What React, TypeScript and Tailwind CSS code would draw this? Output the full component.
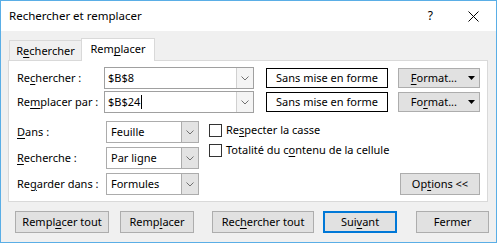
import React from 'react';

const font = { fontFamily: '"Noto Sans", "Open Sans", sans-serif' };

function Key({ children }: { children: React.ReactNode }) {
  return <span className="underline underline-offset-2 decoration-1">{children}</span>;
}

function Chevron() {
  return (
    <svg width="8" height="5" viewBox="0 0 8 5" className="block">
      <path d="M0.5 0.5 L4 4 L7.5 0.5" fill="none" stroke="#707070" strokeWidth="1" />
    </svg>
  );
}

function Caret() {
  return (
    <svg width="7" height="4" viewBox="0 0 7 4" className="block">
      <path d="M0 0 H7 L3.5 4 Z" fill="#000" />
    </svg>
  );
}

function EditCombo({ value, caret }: { value: string; caret?: boolean }) {
  return (
    <div className="flex h-[22px] w-[150px] border border-[#a0a0a0] bg-white">
      <div className="flex flex-1 items-center pl-[3px] text-[11px] text-black">
        {value}
        {caret && <span className="ml-[1px] inline-block h-[14px] w-[1px] bg-black" />}
      </div>
      <div className="flex w-[17px] items-center justify-center border-l border-[#d0d0d0] bg-[#f4f4f4]">
        <Chevron />
      </div>
    </div>
  );
}

function ListCombo({ value }: { value: string }) {
  return (
    <div className="flex h-[22px] w-[93px] border border-[#acacac] bg-white">
      <div className="flex flex-1 items-center pl-[4px] text-[11px] text-black">{value}</div>
      <div className="flex w-[17px] items-center justify-center border-l border-[#acacac] bg-[#e3e3e3]">
        <Chevron />
      </div>
    </div>
  );
}

function Btn({
  children,
  className = '',
  primary,
}: {
  children: React.ReactNode;
  className?: string;
  primary?: boolean;
}) {
  return (
    <div
      className={`flex h-[22px] items-center justify-center whitespace-nowrap bg-[#e1e1e1] text-[11px] text-black ${
        primary ? 'border-2 border-[#0078d7]' : 'border border-[#adadad]'
      } ${className}`}
    >
      {children}
    </div>
  );
}

function FormatBtn({ children }: { children: React.ReactNode }) {
  return (
    <div className="flex h-[20px] w-[82px] items-center justify-end gap-[11px] border border-[#adadad] bg-[#e1e1e1] pr-[4px] text-[11px] text-black">
      <span>{children}</span>
      <Caret />
    </div>
  );
}

function Check({ children }: { children: React.ReactNode }) {
  return (
    <div className="flex h-[13px] items-center gap-[4px] whitespace-nowrap text-[11px] text-black">
      <div className="h-[13px] w-[13px] border border-[#333] bg-white" />
      <span>{children}</span>
    </div>
  );
}

function Label({ children, w }: { children: React.ReactNode; w: string }) {
  return <div className={`${w} whitespace-nowrap text-[11px]`}>{children}</div>;
}

export default function App() {
  return (
    <div
      className="flex h-[243px] w-[497px] flex-col border border-[#5aaee6] bg-[#f0f0f0] text-black"
      style={font}
    >
      {/* title bar */}
      <div className="flex h-[30px] items-center bg-white pl-[8px] pr-[17px]">
        <span className="flex-1 text-[11.5px]">Rechercher et remplacer</span>
        <span className="mr-[35px] text-[12px]">?</span>
        <svg width="11" height="11" viewBox="0 0 11 11">
          <path d="M0.5 0.5 L10.5 10.5 M10.5 0.5 L0.5 10.5" stroke="#000" strokeWidth="1" />
        </svg>
      </div>

      <div className="flex flex-col px-[7px] pt-[7px]">
        {/* tabs */}
        <div className="relative z-10 flex h-[22px] items-end pl-[1px]">
          <div className="flex h-[20px] w-[73px] items-center justify-center border border-b-0 border-[#d9d9d9] pt-[1px] text-[11px]">
            R<Key>e</Key>chercher
          </div>
          <div className="-mb-[1px] -ml-[1px] flex h-[23px] w-[74px] items-center justify-center border border-b-0 border-[#d9d9d9] bg-white pb-[1px] text-[11px]">
            Rem<Key>p</Key>lacer
          </div>
        </div>

        {/* panel */}
        <div className="flex h-[142px] w-[480px] flex-col border border-[#d9d9d9] bg-white pl-[8px] pr-[7px] pt-[6px]">
          <div className="flex items-center">
            <Label w="w-[87px]">
              Re<Key>c</Key>hercher :
            </Label>
            <EditCombo value="$B$8" />
            <div className="ml-[12px] flex h-[20px] w-[122px] items-center justify-center border border-black text-[11px]">
              Sans mise en forme
            </div>
            <div className="ml-[10px]">
              <FormatBtn>
                <Key>F</Key>ormat...
              </FormatBtn>
            </div>
          </div>
          <div className="mt-[2px] flex items-center">
            <Label w="w-[87px]">
              Re<Key>m</Key>placer par :
            </Label>
            <EditCombo value="$B$24" caret />
            <div className="ml-[12px] flex h-[20px] w-[122px] items-center justify-center border border-black text-[11px]">
              Sans mise en forme
            </div>
            <div className="ml-[10px]">
              <FormatBtn>
                Fo<Key>r</Key>mat...
              </FormatBtn>
            </div>
          </div>

          <div className="mt-[8px] flex flex-1 pb-[7px]">
            <div className="flex flex-col gap-[4px]">
              <div className="flex items-center">
                <Label w="w-[89px]">
                  <Key>D</Key>ans :
                </Label>
                <ListCombo value="Feuille" />
              </div>
              <div className="flex items-center">
                <Label w="w-[89px]">
                  <Key>R</Key>echerche :
                </Label>
                <ListCombo value="Par ligne" />
              </div>
              <div className="flex items-center">
                <Label w="w-[89px]">
                  Re<Key>g</Key>arder dans :
                </Label>
                <ListCombo value="Formules" />
              </div>
            </div>
            <div className="ml-[10px] flex flex-1 flex-col pt-[3px]">
              <div className="flex flex-col gap-[7px]">
                <Check>
                  Re<Key>s</Key>pecter la casse
                </Check>
                <Check>
                  Totalité du c<Key>o</Key>ntenu de la cellule
                </Check>
              </div>
              <div className="mt-auto flex justify-end">
                <Btn className="h-[21px] w-[80px]">
                  Op<Key>t</Key>ions &lt;&lt;
                </Btn>
              </div>
            </div>
          </div>
        </div>

        {/* bottom buttons */}
        <div className="mt-[9px] flex items-center pl-[7px]">
          <Btn className="w-[94px]">
            Rempl<Key>a</Key>cer tout
          </Btn>
          <Btn className="ml-[11px] w-[74px]">
            Remp<Key>l</Key>acer
          </Btn>
          <Btn className="ml-[18px] w-[102px]">
            Rec<Key>h</Key>ercher tout
          </Btn>
          <Btn primary className="ml-[9px] w-[74px]">
            Sui<Key>v</Key>ant
          </Btn>
          <Btn className="ml-[19px] w-[73px]">Fermer</Btn>
        </div>
      </div>
    </div>
  );
}
